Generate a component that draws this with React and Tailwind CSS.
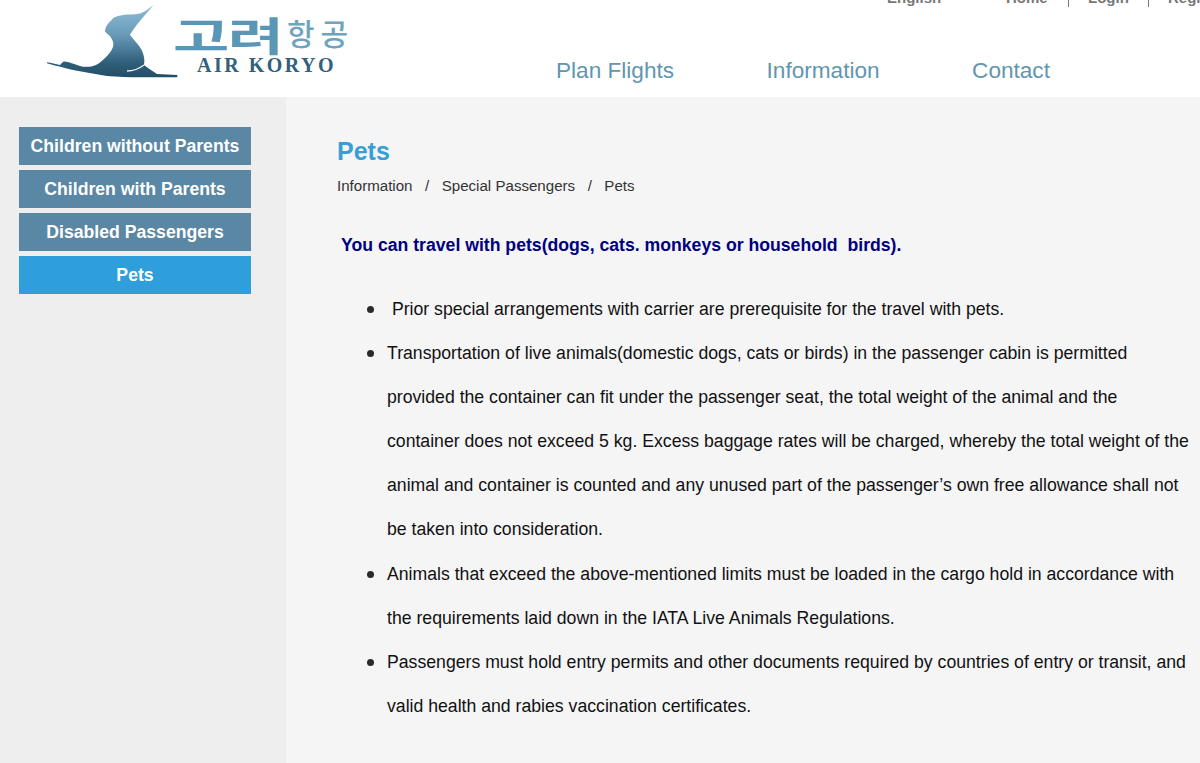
const font = "font-['Liberation_Sans',Arial,sans-serif]";

const sideItems = ["Children without Parents", "Children with Parents", "Disabled Passengers", "Pets"];

const bullet =
  "relative before:absolute before:-left-[20px] before:top-[19px] before:size-[7px] before:rounded-full before:bg-[#2a2a2a]";

function Bird() {
  return (
    <svg width="132" height="74" viewBox="0 0 132 74" className="shrink-0">
      <defs>
        <linearGradient id="birdFill" x1="0" y1="0" x2="0" y2="1">
          <stop offset="0" stopColor="#8dbdd8" />
          <stop offset="0.4" stopColor="#6a9cb9" />
          <stop offset="0.8" stopColor="#2f5f7a" />
          <stop offset="1" stopColor="#234d66" />
        </linearGradient>
      </defs>
      <path
        d="M106.5 0 C101 4 98 7 93 8.5 C87 10 81 9 76 10 C70 11 67 12 64.5 15 C60 19 58 23 58 26.5 C60 29 63 30 64.5 33.5 C66 36 67 39 66 42 C64 47 61 50 58 53 C54 57 50 60 46 61 C42 62 39 62 36 61.7 C32 61 28 59 24.7 58.3 C21 57 18 56 16.3 56.7 C15 57.5 14 59 13 60 C9 59 4 58 0 57.3 L0 58.3 C9 61 18 63 26 65 C37 67 48 69 60 71 C71 72 82 72.3 93 72.3 L130.3 72.3 L130.3 70 L110 69 C107 67 104 65 101.3 63.3 L97 60 C98 55 97 50 94.7 45 C92 40 87 35 83 30 C84 27 87 24 89.7 20 C95 13 101 7 106.5 0 Z"
        fill="url(#birdFill)"
      />
      <path d="M80 66 C87 66 93 63 97 60" fill="none" stroke="#eef3f6" strokeWidth="1.4" />
    </svg>
  );
}

export default function App() {
  return (
    <div className={`${font} flex h-[763px] w-[1200px] flex-col overflow-hidden bg-white`}>
      <header className="relative flex h-[97px] shrink-0 bg-white">
        <div className="flex w-[556px] shrink-0 items-start pl-[47px] pt-[5px]">
          <Bird />
          <div className="-ml-[6px] flex flex-col items-start pt-[11px]">
            <div className="flex h-[36px] items-center font-['Noto_Sans_CJK_KR',sans-serif] leading-none">
              <span className="w-[107px] origin-left scale-x-[1.53] whitespace-nowrap text-[40px] font-bold tracking-[-1px] text-[#5a96b6]">
                고려
              </span>
              <span className="ml-[7px] -mt-[4px] whitespace-nowrap text-[30px] font-medium tracking-[6px] text-[#6fa4c0]">
                항공
              </span>
            </div>
            <div className="ml-[24px] mt-[3px] whitespace-nowrap font-['Liberation_Serif',serif] text-[20px] font-bold leading-none tracking-[2.5px] text-[#33607a]">
              AIR KORYO
            </div>
          </div>
        </div>
        <nav className="flex items-start gap-[92.5px] pt-[57px] text-[22.6px] leading-[28px] text-[#6196af]">
          <span>Plan Flights</span>
          <span>Information</span>
          <span>Contact</span>
        </nav>
        <div className="absolute -top-[11px] left-[887px] flex items-center text-[15px] font-bold leading-[16px] text-[#777777]">
          <span className="w-[119px]">English</span>
          <span className="w-[62px]">Home</span>
          <span className="h-[18px] w-[20px] border-l border-[#777777]" />
          <span className="w-[60px]">Login</span>
          <span className="h-[18px] w-[20px] border-l border-[#777777]" />
          <span>Register</span>
        </div>
      </header>

      <div className="flex flex-1">
        <aside className="flex w-[286px] shrink-0 flex-col gap-[5px] bg-[#eeeeee] pl-[19px] pt-[30px]">
          {sideItems.map((item) => (
            <div
              key={item}
              className={`flex h-[38px] w-[232px] items-center justify-center text-[17.65px] font-bold text-white ${
                item === "Pets" ? "bg-[#2f9fdc]" : "bg-[#5a87a3]"
              }`}
            >
              {item}
            </div>
          ))}
        </aside>

        <main className="flex-1 bg-[#f5f5f6] pl-[51px] pt-[39px]">
          <h1 className="text-[25px] font-bold leading-[30px] text-[#3a9ed4]">Pets</h1>
          <div className="mt-[10px] flex text-[15.1px] leading-[20px] text-[#333333]">
            <span>Information</span>
            <span className="mx-[12.5px]">/</span>
            <span>Special Passengers</span>
            <span className="mx-[12.5px]">/</span>
            <span>Pets</span>
          </div>
          <p className="mt-[37px] whitespace-pre pl-[4px] text-[17.65px] font-bold leading-[24px] text-[#000080]">
            You can travel with pets(dogs, cats. monkeys or household  birds).
          </p>
          <ul className="mt-[30px] w-[855px] list-none pl-[50px] text-[17.67px] leading-[44.1px] text-[#111111]">
            <li className={`${bullet} whitespace-pre`}> Prior special arrangements with carrier are prerequisite for the travel with pets.</li>
            <li className={bullet}>
              Transportation of live animals(domestic dogs, cats or birds) in the passenger cabin is permitted provided
              the container can fit under the passenger seat, the total weight of the animal and the container does not
              exceed 5 kg. Excess baggage rates will be charged, whereby the total weight of the animal and container is
              counted and any unused part of the passenger’s own free allowance shall not be taken into consideration.
            </li>
            <li className={bullet}>
              Animals that exceed the above-mentioned limits must be loaded in the cargo hold in accordance with the
              requirements laid down in the IATA Live Animals Regulations.
            </li>
            <li className={bullet}>
              Passengers must hold entry permits and other documents required by countries of entry or transit, and valid
              health and rabies vaccination certificates.
            </li>
          </ul>
        </main>
      </div>
    </div>
  );
}
